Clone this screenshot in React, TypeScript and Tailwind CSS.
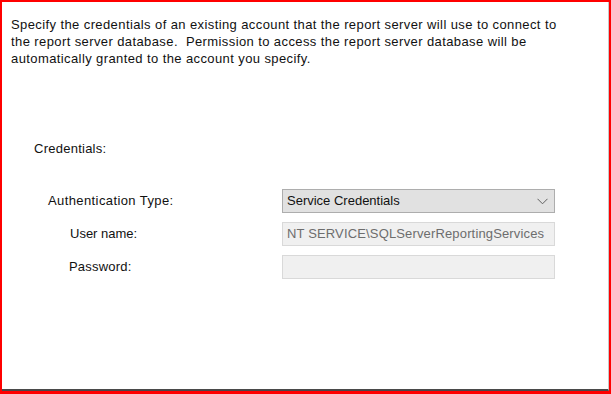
export default function App() {
  return (
    <div className="w-[611px] h-[394px] flex flex-col border-t-2 border-l-2 border-r-2 border-b-[3px] border-[#ff0000] font-['Liberation_Sans',Arial,sans-serif] text-[13px] text-[#111]">
      <div className="flex-1 bg-white border-b-2 border-r border-b-[#4a4a4a] border-r-[#c8c8c8] flex flex-col">
        <p className="pl-[9px] pt-[14px] leading-[17px] tracking-[0.4px]">
          Specify the credentials of an existing account that the report server will use to connect to
          <br />
          the report server database.&nbsp; Permission to access the report server database will be
          <br />
          automatically granted to the account you specify.
        </p>

        <div className="mt-[73px] pl-[32px] leading-[17px] tracking-[0.25px]">Credentials:</div>

        <div className="mt-[32px] flex flex-col gap-[9px]">
          <div className="flex items-center h-[24px]">
            <div className="w-[280px] pl-[46px] tracking-[0.4px]">Authentication Type:</div>
            <div className="w-[273px] h-full flex items-center justify-between border border-[#adadad] bg-[#e1e1e1] pl-[4px] pr-[6px]">
              <span>Service Credentials</span>
              <svg width="11" height="7" viewBox="0 0 11 7" fill="none">
                <path d="M0.5 0.8 L5.5 5.8 L10.5 0.8" stroke="#606060" strokeWidth="1" />
              </svg>
            </div>
          </div>

          <div className="flex items-center h-[24px]">
            <div className="w-[280px] pl-[68px]">User name:</div>
            <div className="w-[273px] h-full flex items-center border border-[#d9d9d9] bg-[#f0f0f0] pl-[4px] text-[#6d6d6d] tracking-[0.15px]">
              NT SERVICE\SQLServerReportingServices
            </div>
          </div>

          <div className="flex items-center h-[24px]">
            <div className="w-[280px] pl-[67px] tracking-[0.2px]">Password:</div>
            <div className="w-[273px] h-full border border-[#d9d9d9] bg-[#f0f0f0]" />
          </div>
        </div>
      </div>
    </div>
  );
}
